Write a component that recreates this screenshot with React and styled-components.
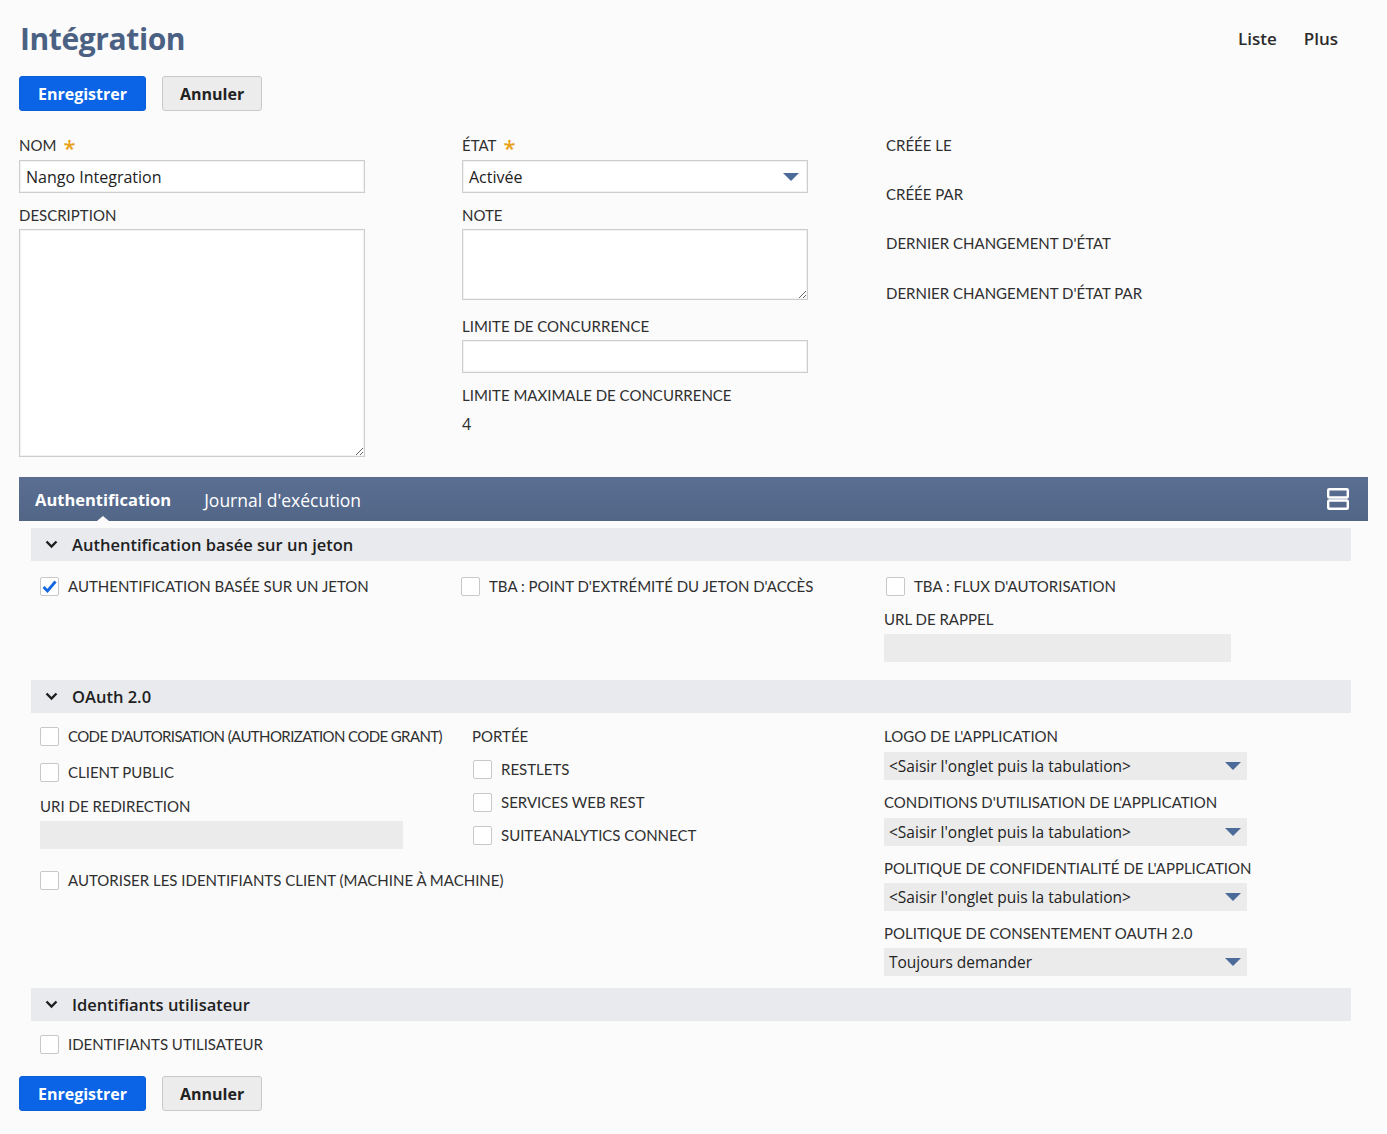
import React from 'react'
import styled, { createGlobalStyle } from 'styled-components'

const GlobalStyle = createGlobalStyle`
  html, body {
    margin: 0;
    padding: 0;
    background: #fbfbfb;
  }
  body {
    font-family: "Open Sans", "Liberation Sans", sans-serif;
    color: #2f2f2f;
  }
  * { box-sizing: border-box; }
`

const Page = styled.div`
  padding: 18px 19px 24px 19px;
`

const TopBar = styled.div`
  display: flex;
  align-items: center;
  justify-content: space-between;
  height: 40px;
`

const Title = styled.h1`
  margin: 0;
  font-family: "Open Sans", sans-serif;
  font-weight: 700;
  font-size: 30px;
  letter-spacing: -0.4px;
  color: #4b6183;
  padding-left: 1px;
`

const TopNav = styled.div`
  display: flex;
  gap: 27px;
  margin-right: 30px;
  font-size: 17px;
  font-weight: 600;
  color: #2b2b2b;
`

const ButtonRow = styled.div`
  display: flex;
  gap: 16px;
  margin-top: ${p => p.$top || 0}px;
`

const Button = styled.button`
  height: 35px;
  padding: 0 ${p => (p.$primary ? 18 : 17)}px;
  border-radius: 3px;
  font-family: "Open Sans", sans-serif;
  font-size: 16px;
  font-weight: 700;
  cursor: pointer;
  border: 1px solid ${p => (p.$primary ? '#0a5fd8' : '#c9c9c9')};
  background: ${p => (p.$primary ? '#0b63e5' : '#ececec')};
  color: ${p => (p.$primary ? '#fff' : '#222')};
`

const TopGrid = styled.div`
  display: grid;
  grid-template-columns: 443px 424px 1fr;
  margin-top: 24px;
`

const Column = styled.div`
  display: flex;
  flex-direction: column;
`

const Label = styled.div`
  font-family: Lato, "Open Sans", sans-serif;
  font-size: 15px;
  line-height: 20px;
  color: #2f2f2f;
  margin-top: ${p => p.$top || 0}px;
  margin-bottom: ${p => p.$bottom || 0}px;
  margin-left: ${p => p.$left || 0}px;
  white-space: nowrap;
`

const Star = styled.span`
  display: inline-block;
  height: 20px;
  color: #e8a21a;
  margin-left: 7px;
  font-family: "Open Sans", sans-serif;
  font-size: 22px;
  font-weight: 600;
  line-height: 24px;
  vertical-align: top;
`

const Input = styled.div`
  width: 346px;
  height: ${p => p.$h || 33}px;
  border: 1px solid #cdcdcd;
  box-shadow: inset 0 0 0 1px #f2f2f2;
  background: #fff;
  display: flex;
  align-items: center;
  padding: 0 6px;
  font-size: 16px;
  color: #222;
  justify-content: space-between;
`

const TextArea = styled.textarea`
  width: 346px;
  height: ${p => p.$h}px;
  border: 1px solid #cdcdcd;
  box-shadow: inset 0 0 0 1px #f2f2f2;
  background: #fff;
  resize: vertical;
  margin: 0;
  display: block;
`

const Value = styled.div`
  font-size: 16px;
  line-height: 20px;
  margin-top: ${p => p.$top || 0}px;
`

const Arrow = styled.span`
  width: 0;
  height: 0;
  border-left: 8px solid transparent;
  border-right: 8px solid transparent;
  border-top: 8px solid #4d6b98;
  margin-right: ${p => p.$right || 2}px;
`

const TabBar = styled.div`
  margin-top: 20px;
  height: 44px;
  background: linear-gradient(#5a6e92, #526688);
  display: flex;
  align-items: center;
  padding: 0 16px;
  gap: 33px;
`

const Tab = styled.div`
  font-family: "Open Sans", sans-serif;
  font-size: ${p => (p.$active ? 16.5 : 17.5)}px;
  color: #fff;
  font-weight: ${p => (p.$active ? 700 : 400)};
  position: relative;
  height: 44px;
  line-height: 46px;
  &::after {
    content: '';
    display: ${p => (p.$active ? 'block' : 'none')};
    position: absolute;
    left: 50%;
    bottom: 0;
    margin-left: -6px;
    border-left: 6px solid transparent;
    border-right: 6px solid transparent;
    border-bottom: 5px solid #fbfbfb;
  }
`

const MenuIcon = styled.svg`
  margin-left: auto;
  margin-right: 3px;
`

const TabBody = styled.div`
  padding: 7px 17px 0 12px;
`

const SectionHeader = styled.div`
  height: 33px;
  background: #e8eaee;
  display: flex;
  align-items: center;
  padding-left: 14px;
  gap: 14px;
  font-size: 16.5px;
  font-weight: 600;
  color: #1f1f1f;
  margin-top: ${p => p.$top || 0}px;
`

const SectionGrid = styled.div`
  display: grid;
  grid-template-columns: ${p => p.$cols};
  padding-left: 9px;
  margin-top: ${p => p.$top || 0}px;
`

const CheckRow = styled.label`
  display: flex;
  align-items: center;
  gap: 9px;
  height: 20px;
  font-family: Lato, "Open Sans", sans-serif;
  font-size: 15px;
  letter-spacing: ${p => (p.$narrow ? -0.6 : 0)}px;
  color: #2f2f2f;
  white-space: nowrap;
  margin-top: ${p => p.$top || 0}px;
  margin-left: ${p => p.$left || 0}px;
`

const Box = styled.span`
  width: 19px;
  height: 19px;
  border: 1px solid #c8c8c8;
  border-radius: 2px;
  background: #fff;
  display: flex;
  align-items: center;
  justify-content: center;
  flex: none;
`

const GrayField = styled.div`
  width: ${p => p.$w}px;
  height: 28px;
  background: #ebebeb;
  display: flex;
  align-items: center;
  justify-content: space-between;
  padding: 0 5px;
  font-size: 15.5px;
  color: #222;
  margin-top: ${p => p.$top || 0}px;
  margin-left: ${p => p.$left || 0}px;
`

const Chevron = () => (
  <svg width="13" height="9" viewBox="0 0 13 9">
    <path d="M1.5 1.5 L6.5 6.5 L11.5 1.5" fill="none" stroke="#1f1f1f" strokeWidth="2.4" />
  </svg>
)

const Check = ({ checked, children, top, left, narrow }) => (
  <CheckRow $top={top} $left={left} $narrow={narrow}>
    <Box>
      {checked && (
        <svg width="15" height="13" viewBox="0 0 15 13">
          <path d="M1.5 7 L5.5 11 L13.5 1.5" fill="none" stroke="#1467e0" strokeWidth="2.8" />
        </svg>
      )}
    </Box>
    {children}
  </CheckRow>
)

const Actions = ({ top }) => (
  <ButtonRow $top={top}>
    <Button $primary>Enregistrer</Button>
    <Button>Annuler</Button>
  </ButtonRow>
)

const Lookup = ({ children, top }) => (
  <GrayField $w={363} $top={top}>
    {children}
    <Arrow $right={1} />
  </GrayField>
)

export default function App() {
  return (
    <Page>
      <GlobalStyle />
      <TopBar>
        <Title>Intégration</Title>
        <TopNav>
          <span>Liste</span>
          <span>Plus</span>
        </TopNav>
      </TopBar>
      <Actions top={18} />

      <TopGrid>
        <Column>
          <Label $bottom={5}>NOM<Star>*</Star></Label>
          <Input>Nango Integration</Input>
          <Label $top={12} $bottom={4}>DESCRIPTION</Label>
          <TextArea $h={228} />
        </Column>
        <Column>
          <Label $bottom={5}>ÉTAT<Star>*</Star></Label>
          <Input>
            Activée
            <Arrow $right={0} />
          </Input>
          <Label $top={12} $bottom={4}>NOTE</Label>
          <TextArea $h={71} />
          <Label $top={16} $bottom={4}>LIMITE DE CONCURRENCE</Label>
          <Input $h={33} />
          <Label $top={12}>LIMITE MAXIMALE DE CONCURRENCE</Label>
          <Value $top={9}>4</Value>
        </Column>
        <Column>
          <Label>CRÉÉE LE</Label>
          <Label $top={29}>CRÉÉE PAR</Label>
          <Label $top={29}>DERNIER CHANGEMENT D'ÉTAT</Label>
          <Label $top={30}>DERNIER CHANGEMENT D'ÉTAT PAR</Label>
        </Column>
      </TopGrid>

      <TabBar>
        <Tab $active>Authentification</Tab>
        <Tab>Journal d'exécution</Tab>
        <MenuIcon width="22" height="22" viewBox="0 0 22 22">
          <rect x="1.2" y="1.2" width="19.6" height="8.3" rx="1" fill="none" stroke="#fff" strokeWidth="2.4" />
          <rect x="1.2" y="12.5" width="19.6" height="8.3" rx="1" fill="none" stroke="#fff" strokeWidth="2.4" />
        </MenuIcon>
      </TabBar>

      <TabBody>
        <SectionHeader>
          <Chevron />
          Authentification basée sur un jeton
        </SectionHeader>
        <SectionGrid $cols="421px 425px 1fr" $top={15}>
          <Column>
            <Check checked>AUTHENTIFICATION BASÉE SUR UN JETON</Check>
          </Column>
          <Column>
            <Check>TBA : POINT D'EXTRÉMITÉ DU JETON D'ACCÈS</Check>
          </Column>
          <Column>
            <Check>TBA : FLUX D'AUTORISATION</Check>
            <Label $top={13} $left={-2}>URL DE RAPPEL</Label>
            <GrayField $w={347} $top={5} $left={-2} />
          </Column>
        </SectionGrid>

        <SectionHeader $top={18}>
          <Chevron />
          OAuth 2.0
        </SectionHeader>
        <SectionGrid $cols="432px 412px 1fr" $top={13}>
          <Column>
            <Check narrow>CODE D'AUTORISATION (AUTHORIZATION CODE GRANT)</Check>
            <Check top={16}>CLIENT PUBLIC</Check>
            <Label $top={14}>URI DE REDIRECTION</Label>
            <GrayField $w={363} $top={5} />
            <Check top={21}>AUTORISER LES IDENTIFIANTS CLIENT (MACHINE À MACHINE)</Check>
          </Column>
          <Column>
            <Label>PORTÉE</Label>
            <Check top={13} left={1}>RESTLETS</Check>
            <Check top={13} left={1}>SERVICES WEB REST</Check>
            <Check top={13} left={1}>SUITEANALYTICS CONNECT</Check>
          </Column>
          <Column>
            <Label>LOGO DE L'APPLICATION</Label>
            <Lookup top={6}>&lt;Saisir l'onglet puis la tabulation&gt;</Lookup>
            <Label $top={12}>CONDITIONS D'UTILISATION DE L'APPLICATION</Label>
            <Lookup top={6}>&lt;Saisir l'onglet puis la tabulation&gt;</Lookup>
            <Label $top={12}>POLITIQUE DE CONFIDENTIALITÉ DE L'APPLICATION</Label>
            <Lookup top={5}>&lt;Saisir l'onglet puis la tabulation&gt;</Lookup>
            <Label $top={12}>POLITIQUE DE CONSENTEMENT OAUTH 2.0</Label>
            <Lookup top={5}>Toujours demander</Lookup>
          </Column>
        </SectionGrid>

        <SectionHeader $top={12}>
          <Chevron />
          Identifiants utilisateur
        </SectionHeader>
        <SectionGrid $cols="1fr" $top={13}>
          <Check>IDENTIFIANTS UTILISATEUR</Check>
        </SectionGrid>
      </TabBody>

      <Actions top={22} />
    </Page>
  )
}
